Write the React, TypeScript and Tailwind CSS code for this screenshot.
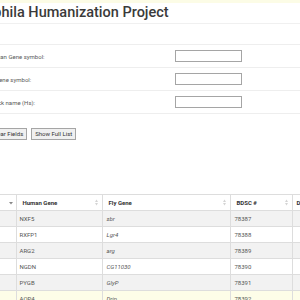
import React from 'react';

const rows = [
  { human: 'NXF5', fly: 'sbr', bdsc: '78387' },
  { human: 'RXFP1', fly: 'Lgr4', bdsc: '78388' },
  { human: 'ARG2', fly: 'arg', bdsc: '78389' },
  { human: 'NGDN', fly: 'CG11030', bdsc: '78390' },
  { human: 'PYGB', fly: 'GlyP', bdsc: '78391' },
  { human: 'AQP4', fly: 'Drip', bdsc: '78392' },
];

function SortIcon({ active = false }: { active?: boolean }) {
  if (active) {
    return (
      <svg width="4" height="4" viewBox="0 0 4 4" className="shrink-0">
        <path d="M0 1 L4 1 L2 3.5 Z" fill="#888" />
      </svg>
    );
  }
  return (
    <svg width="3" height="7" viewBox="0 0 3 7" className="shrink-0">
      <path d="M0 3 L3 3 L1.5 0.5 Z" fill="#d4d4d4" />
      <path d="M0 4 L3 4 L1.5 6.5 Z" fill="#d4d4d4" />
    </svg>
  );
}

function FormRow({ label, shift }: { label: string; shift: string }) {
  return (
    <div className="flex h-[23px] items-center border-b border-[#eeeeee]">
      <div className="w-[175px] shrink-0 overflow-visible">
        <span className={`${shift} block whitespace-nowrap text-[6px] text-[#5a5a5a]`}>{label}</span>
      </div>
      <input className="h-[12px] w-[67px] border border-[#a5a5a5] bg-white outline-none" />
    </div>
  );
}

export default function App() {
  return (
    <div className="relative h-[300px] w-[300px] overflow-hidden bg-white font-['Roboto',sans-serif]">
      <div className="h-[3px] bg-[#fcfce6]" />
      <div className="flex h-[21px] items-center border-b border-[#f0f0f0]">
        <h1 className="-ml-[45px] whitespace-nowrap text-[14.5px] font-medium leading-none text-[#3a3a3a]">
          Drosophila Humanization Project
        </h1>
      </div>

      <div className="mt-[20px] border-t border-[#eeeeee]">
        <FormRow label="Human Gene symbol:" shift="-ml-[12.5px]" />
        <FormRow label="Fly Gene symbol:" shift="-ml-[14px]" />
        <FormRow label="Stock name (Hs):" shift="-ml-[11px]" />
      </div>

      <div className="mt-[14px] flex gap-[4px]">
        <button className="-ml-[12px] h-[12px] border border-[#a5a5a5] bg-[#f0f0f0] px-[3px] text-[6px] leading-none text-[#333]">
          Clear Fields
        </button>
        <button className="h-[12px] border border-[#a5a5a5] bg-[#f0f0f0] px-[3px] text-[6px] leading-none text-[#333]">
          Show Full List
        </button>
      </div>

      <table className="mt-[54px] w-[360px] table-fixed border-collapse text-[6px]">
        <colgroup>
          <col className="w-[16px]" />
          <col className="w-[86px]" />
          <col className="w-[128px]" />
          <col className="w-[62px]" />
          <col className="w-[68px]" />
        </colgroup>
        <thead>
          <tr className="h-[16px] border-y border-[#dddddd]">
            <th className="border-r border-[#dddddd] pr-[3px]">
              <div className="flex justify-end">
                <SortIcon active />
              </div>
            </th>
            <th className="border-r border-[#dddddd] px-[4px] pl-[6px] text-left font-bold text-[#333]">
              <div className="flex items-center justify-between">
                <span>Human Gene</span>
                <SortIcon />
              </div>
            </th>
            <th className="border-r border-[#dddddd] px-[4px] pl-[6px] text-left font-bold text-[#333]">
              <div className="flex items-center justify-between">
                <span>Fly Gene</span>
                <SortIcon />
              </div>
            </th>
            <th className="border-r border-[#dddddd] px-[4px] pl-[6px] text-left font-bold text-[#333]">
              <div className="flex items-center justify-between">
                <span>BDSC #</span>
                <SortIcon />
              </div>
            </th>
            <th className="px-[4px] text-left font-bold text-[#333]">Details</th>
          </tr>
        </thead>
        <tbody>
          {rows.map((r, i) => (
            <tr
              key={r.bdsc}
              className={`h-[16px] border-b border-[#dddddd] ${
                i === 5 ? 'bg-[#fdfde8]' : i % 2 === 0 ? 'bg-[#f2f2f2]' : 'bg-white'
              }`}
            >
              <td className="border-r border-[#dddddd]" />
              <td className="border-r border-[#dddddd] pl-[3px] text-[#555]">{r.human}</td>
              <td className="border-r border-[#dddddd] pl-[4px] italic text-[#555]">{r.fly}</td>
              <td className="border-r border-[#dddddd] pl-[4px] text-[#555]">{r.bdsc}</td>
              <td />
            </tr>
          ))}
        </tbody>
      </table>
    </div>
  );
}
